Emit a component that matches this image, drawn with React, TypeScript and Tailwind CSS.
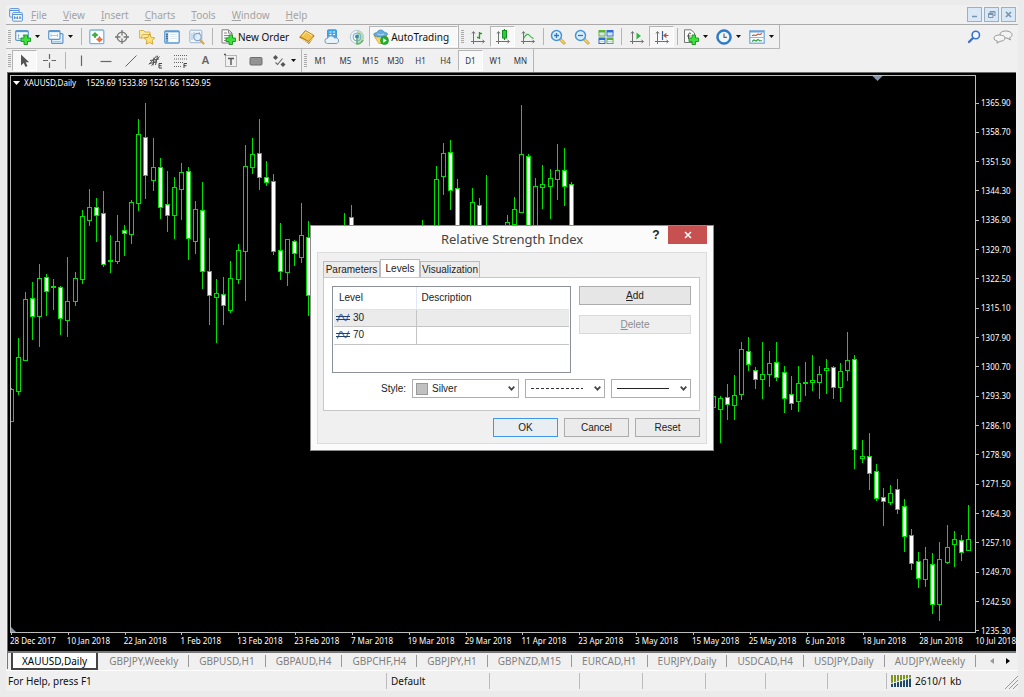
import type { ReactNode } from "react";

type Candle = [
  index: number,
  high: number,
  low: number,
  top: number,
  bottom: number,
  down?: number
];

const candles: Candle[] = [
  [0, 388, 421, 389, 421],
  [1, 338, 394, 357, 391],
  [2, 292, 360, 299, 360],
  [3, 282, 339, 298, 316, 1],
  [4, 264, 346, 278, 316],
  [5, 274, 315, 277, 291, 1],
  [6, 279, 309, 286, 287],
  [7, 286, 334, 287, 318, 1],
  [8, 257, 336, 301, 320],
  [9, 272, 305, 278, 301],
  [10, 210, 283, 216, 279],
  [11, 189, 225, 207, 220],
  [12, 198, 241, 207, 215, 1],
  [13, 191, 266, 213, 264, 1],
  [14, 235, 272, 260, 261],
  [15, 215, 263, 241, 261],
  [16, 225, 255, 230, 233, 1],
  [17, 200, 243, 202, 234],
  [18, 119, 210, 134, 203],
  [19, 103, 198, 137, 175, 1],
  [20, 138, 190, 167, 180],
  [21, 158, 218, 167, 207, 1],
  [22, 171, 231, 204, 215, 1],
  [23, 177, 238, 187, 215],
  [24, 163, 219, 172, 189],
  [25, 167, 259, 171, 238, 1],
  [26, 201, 253, 209, 241],
  [27, 182, 288, 210, 271, 1],
  [28, 238, 324, 271, 295, 1],
  [29, 279, 342, 293, 297],
  [30, 277, 324, 294, 305, 1],
  [31, 261, 312, 278, 310],
  [32, 244, 283, 250, 279],
  [33, 145, 300, 166, 251],
  [34, 138, 173, 154, 167],
  [35, 119, 189, 153, 177, 1],
  [36, 161, 185, 177, 182, 1],
  [37, 174, 254, 181, 251, 1],
  [38, 223, 279, 250, 271, 1],
  [39, 239, 285, 239, 272],
  [40, 240, 265, 241, 253, 1],
  [41, 203, 262, 235, 257],
  [42, 221, 315, 237, 295, 1],
  [47, 213, 260, 228, 250],
  [48, 205, 270, 217, 250, 1],
  [58, 220, 260, 230, 250],
  [60, 166, 270, 179, 260],
  [61, 143, 194, 153, 176],
  [62, 140, 209, 152, 190, 1],
  [63, 179, 270, 188, 260, 1],
  [65, 188, 270, 202, 260],
  [66, 198, 270, 205, 250, 1],
  [67, 175, 270, 230, 250],
  [70, 215, 240, 222, 235],
  [71, 197, 240, 209, 224],
  [72, 105, 212, 154, 212],
  [73, 154, 240, 156, 235, 1],
  [74, 178, 240, 186, 235],
  [75, 165, 208, 184, 187],
  [76, 169, 218, 178, 186],
  [77, 144, 199, 170, 179],
  [78, 148, 205, 170, 186, 1],
  [79, 182, 240, 184, 235, 1],
  [99, 396, 407, 396, 407],
  [100, 396, 442, 398, 409],
  [101, 384, 419, 397, 404, 1],
  [102, 375, 419, 395, 405],
  [103, 342, 399, 349, 394],
  [104, 337, 370, 351, 364, 1],
  [105, 367, 388, 370, 379, 1],
  [106, 342, 398, 374, 379],
  [107, 351, 386, 363, 374],
  [108, 342, 380, 362, 377, 1],
  [109, 366, 412, 372, 398, 1],
  [110, 376, 409, 394, 403, 1],
  [111, 366, 411, 383, 401],
  [112, 362, 395, 382, 383],
  [113, 355, 390, 380, 382],
  [114, 366, 398, 374, 382],
  [115, 359, 393, 368, 370],
  [116, 366, 398, 367, 387, 1],
  [117, 363, 401, 371, 387],
  [118, 332, 380, 360, 370],
  [119, 355, 468, 359, 449, 1],
  [120, 440, 462, 456, 458],
  [121, 433, 489, 456, 473, 1],
  [122, 464, 500, 471, 498, 1],
  [123, 488, 525, 497, 501, 1],
  [124, 485, 504, 493, 502],
  [125, 479, 513, 489, 509, 1],
  [126, 499, 551, 506, 536, 1],
  [127, 529, 569, 535, 563, 1],
  [128, 552, 587, 561, 578, 1],
  [129, 547, 586, 559, 579],
  [130, 553, 613, 564, 604, 1],
  [131, 542, 620, 559, 604],
  [132, 525, 563, 547, 562],
  [133, 531, 566, 539, 544],
  [134, 535, 560, 540, 552, 1],
  [135, 505, 550, 539, 550],
];

const prices = [
  "1365.90", "1358.70", "1351.50", "1344.30", "1336.90", "1329.70", "1322.50",
  "1315.10", "1307.90", "1300.70", "1293.30", "1286.10", "1278.90", "1271.50",
  "1264.30", "1257.10", "1249.70", "1242.50", "1235.30",
];

const dates = [
  "28 Dec 2017", "10 Jan 2018", "22 Jan 2018", "1 Feb 2018", "13 Feb 2018",
  "23 Feb 2018", "7 Mar 2018", "19 Mar 2018", "29 Mar 2018", "11 Apr 2018",
  "23 Apr 2018", "3 May 2018", "15 May 2018", "25 May 2018", "6 Jun 2018",
  "18 Jun 2018", "28 Jun 2018",
];

const menus = ["File", "View", "Insert", "Charts", "Tools", "Window", "Help"];

const charts = [
  "GBPJPY,Weekly", "GBPUSD,H1", "GBPAUD,H4", "GBPCHF,H4", "GBPJPY,H1",
  "GBPNZD,M15", "EURCAD,H1", "EURJPY,Daily", "USDCAD,H4", "USDJPY,Daily",
  "AUDJPY,Weekly",
];

const timeframes = ["M1", "M5", "M15", "M30", "H1", "H4", "D1", "W1", "MN"];

const Svg = ({ children }: { children: ReactNode }) => (
  <svg className="w-4 h-4 shrink-0" viewBox="0 0 16 16" fill="none" aria-hidden="true">
    {children}
  </svg>
);

const plus = (
  <path d="M9 6h3.500v3H15.500v3.500h-3v3H9v-3H6V9h3z" fill="#3fe03f" stroke="#17951a" strokeWidth=".9" />
);

const axes = (
  <path d="M3.500 3v12M1 12.500h13M2 4.500l1.500-2 1.500 2M12.500 11l2 1.500-2 1.500" stroke="#707070" />
);

const lens = (
  <>
    <path d="M9.500 9.500l4.500 4.500" stroke="#c2912a" strokeWidth="3" strokeLinecap="round" />
    <path d="M10 10l4 4" stroke="#f8d974" strokeWidth="1.600" strokeLinecap="round" />
    <circle cx="6.500" cy="6.500" r="5" fill="#d8eefc" stroke="#4a94d6" strokeWidth="1.500" />
  </>
);

const icons: Record<string, ReactNode> = {
  newChart: (
    <>
      <rect x=".7" y="1.700" width="12.600" height="9.600" rx="1" fill="#f5faff" stroke="#5d98cc" strokeWidth="1.200" />
      <path d="M1 2.500h12" stroke="#5d98cc" strokeWidth="1.300" />
      <path d="M3.500 5v4M2.500 6.500h2M8.500 5v3M7.500 6.500h2M3 9.500h3" stroke="#8daccb" strokeWidth=".8" />
      {plus}
    </>
  ),
  profiles: (
    <>
      <rect x="3.600" y="4.600" width="11.300" height="9.800" rx="1" fill="#e4f0fc" stroke="#5d98cc" strokeWidth="1.200" />
      <rect x=".7" y="1.700" width="11.300" height="8.600" rx="1" fill="#f8fbff" stroke="#5d98cc" strokeWidth="1.200" />
      <path d="M1 2.500h11" stroke="#5d98cc" strokeWidth="1.300" />
      <path d="M3 5v3M9.500 5v3M3 6.500h6.500M5 12.500h8" stroke="#9dbfe0" strokeWidth=".8" />
    </>
  ),
  marketWatch: (
    <>
      <rect x=".8" y="1" width="14" height="13.600" rx="1.200" fill="#fdfeff" stroke="#79b4e4" strokeWidth="1.300" />
      <path d="M6 3.500L9 6.300 7.500 6.500 6 9 4.500 6.500 3 6.300z" fill="#35b63a" stroke="#1f8f25" strokeWidth=".6" />
      <path d="M10.500 13l-3-2.800L9 10l1.500-2.500L12 10l1.500.2z" fill="#f46a37" stroke="#d04a18" strokeWidth=".6" />
    </>
  ),
  target: (
    <>
      <circle cx="8" cy="8" r="4.800" stroke="#777" strokeWidth="1.300" />
      <path d="M8 1v5.500M8 9.500V15M1 8h5.500M9.500 8H15" stroke="#777" strokeWidth="1.300" />
    </>
  ),
  favorites: (
    <>
      <path d="M.5 3V1.500h4l1.500 1.500h5V9H.5z" fill="#fbe9a2" stroke="#d0a63c" strokeWidth=".8" />
      <path d="M2 9.500l1.500-4H12" stroke="#d0a63c" strokeWidth=".8" />
      <path d="M10.500 5l1.600 3.400 3.700.5-2.700 2.600.7 3.700-3.300-1.800-3.300 1.800.7-3.700-2.700-2.600 3.700-.5z" fill="#ffe375" stroke="#c8962c" strokeWidth=".8" />
    </>
  ),
  navigator: (
    <>
      <rect x=".8" y="1.800" width="14.400" height="12.200" rx="1" fill="#fbfdff" stroke="#5a98d2" strokeWidth="1.300" />
      <path d="M1 2.700h14" stroke="#5a98d2" strokeWidth="1.300" />
      <path d="M3 4v9.500" stroke="#6ea6db" strokeWidth="2.400" />
      <path d="M2.500 5.500h1M2.500 7.500h1M2.500 9.500h1" stroke="#234" />
      <path d="M6 5.500h7M6 7.500h7M6 9.500h7" stroke="#d2dfea" strokeWidth=".7" />
    </>
  ),
  tester: (
    <>
      <rect x=".8" y="1.200" width="12" height="12.500" rx="1" fill="#f1f6fb" stroke="#9ab6d2" />
      <path d="M3 11V4M5 9V3M7 10V4M10.500 6V3" stroke="#a5bcd2" />
      <path d="M11 11l3.500 3.500" stroke="#dba839" strokeWidth="2.200" strokeLinecap="round" />
      <circle cx="8.500" cy="8" r="3.700" fill="#dcecf9" fillOpacity=".8" stroke="#82a6cb" strokeWidth="1.200" />
    </>
  ),
  newOrder: (
    <>
      <path d="M2 .8h6.500L12 4v10H2z" fill="#fafafa" stroke="#808080" />
      <path d="M8.500 1v3.200H12M4 4h3M4 6.500h6M4 9h4M4 11.500h3" stroke="#808080" strokeWidth=".9" />
      {plus}
    </>
  ),
  book: (
    <>
      <path d="M.8 8.500L6.500 2l8.500 5-5 7.500z" fill="#b67a12" stroke="#91600a" strokeWidth=".7" />
      <path d="M1 7.700L6.500 1.500 15 6.500l-5.200 6z" fill="#f1c24a" stroke="#a7700e" strokeWidth=".7" />
      <path d="M3.500 7L7 3l6 3.500" stroke="#fbe59b" />
      <path d="M1.500 9.500l8.300 4L14.500 8" stroke="#fff4d0" strokeWidth=".8" />
    </>
  ),
  cloud: (
    <>
      <rect x="3.500" y=".8" width="9" height="8.500" rx=".8" fill="#3fa9f0" stroke="#2d8dd8" strokeWidth=".8" />
      <path d="M5.500 3h2M9 3h2M5.500 5.500h2M9 5.500h2" stroke="#fff" strokeWidth="1.200" />
      <path d="M3.500 14.500a2.600 2.600 0 0 1 0-5.200 3.800 3.800 0 0 1 7-.3 2.800 2.800 0 0 1 2.300 5.500z" fill="#eaf2f9" stroke="#6d92b2" strokeWidth=".9" />
    </>
  ),
  signals: (
    <>
      <circle cx="8" cy="8" r="6.700" fill="#edf3f6" stroke="#b3cad6" />
      <path d="M8 1.300a6.700 6.700 0 0 1 1 13.300z" fill="#b7dcb2" />
      <circle cx="8" cy="8" r="4" stroke="#7cadcb" />
      <circle cx="8" cy="7.500" r="2" fill="#3f87ba" />
      <path d="M8 9v6c3 0 5-2 6-4" stroke="#65b068" strokeWidth="1.600" />
    </>
  ),
  auto: (
    <>
      <path d="M1 7h13l-4.500 7.500H6z" fill="#f8d860" stroke="#cc9f30" strokeWidth=".7" />
      <path d="M.6 5.500C1 3.700 3 4 4 3.500 5 .2 10.300.2 11.200 3.200c1.400.2 3.300.4 3.400 2C14 7.500 10 8 7.500 8S1.500 8 .6 5.500z" fill="#63addf" stroke="#4285b9" strokeWidth=".7" />
      <path d="M4.500 5c2 1 4.500 1 6.500 0" stroke="#b8ddf5" />
      <circle cx="11.500" cy="11.500" r="4" fill="#1fb52e" stroke="#118320" strokeWidth=".6" />
      <path d="M10.200 9.200l3.500 2.300-3.500 2.300z" fill="#fff" />
    </>
  ),
  bars: (
    <>
      {axes}
      <path d="M9.500 3v7M9.500 4.500h2.500M7 8.500h2.500" stroke="#1f9a2b" strokeWidth="1.300" />
    </>
  ),
  candle: (
    <>
      {axes}
      <path d="M9.500 0v11" stroke="#149221" strokeWidth="1.200" />
      <rect x="7.500" y="1.500" width="4" height="7.500" fill="#2fca42" stroke="#149221" />
    </>
  ),
  line: (
    <>
      {axes}
      <path d="M3.500 9.500c3-5 4.500-5 6-3s2.500 2 4 3" stroke="#3fae49" strokeWidth="1.200" />
    </>
  ),
  zoomIn: (
    <>
      {lens}
      <path d="M4 6.500h5M6.500 4v5" stroke="#2f78bd" strokeWidth="1.300" />
    </>
  ),
  zoomOut: (
    <>
      {lens}
      <path d="M4 6.500h5" stroke="#2f78bd" strokeWidth="1.300" />
    </>
  ),
  tile: (
    <>
      <path d="M.5 1h7v6.500h-7zM8.500 8.500h7V15h-7z" fill="#5fae35" />
      <path d="M8.500 1h7v6.500h-7zM.5 8.500h7V15h-7z" fill="#2f6dd0" />
      <path d="M1.500 3.500h5v3h-5zM9.500 3.500h5v3h-5zM1.500 11h5v3h-5zM9.500 11h5v3h-5z" fill="#eaf5ff" />
      <path d="M2 5h4M10 5h4M2 12.500h4M10 12.500h4" stroke="#a9c8dd" strokeWidth=".7" />
    </>
  ),
  scroll: (
    <>
      {axes}
      <path d="M7.500 3.500l4.500 3.500-4.500 3.500z" fill="#2fb83e" />
    </>
  ),
  shift: (
    <>
      {axes}
      <path d="M8.500 2v9" stroke="#31639a" strokeWidth="1.200" />
      <path d="M14.500 6.500H10M12.500 4.500l-2.500 2 2.500 2" stroke="#c5482a" strokeWidth="1.200" />
    </>
  ),
  indicator: (
    <>
      <path d="M1.500.8H8L11.500 4v9.500h-10z" fill="#fafafa" stroke="#777" />
      <path d="M8 4.500c-2-1-2.500 0-2.500 1.500V10M4 7h3.500" stroke="#555" />
      {plus}
    </>
  ),
  clock: (
    <>
      <circle cx="8" cy="8" r="6.400" fill="#f1f8fd" stroke="#2f7fd0" strokeWidth="2.200" />
      <circle cx="8" cy="8" r="7.400" stroke="#1f5fa8" strokeWidth=".5" />
      <path d="M8 4.500v3.800h3" stroke="#666" strokeWidth="1.200" />
    </>
  ),
  template: (
    <>
      <rect x=".8" y="1.800" width="14.400" height="12.400" fill="#fbfdff" stroke="#6ea6da" strokeWidth="1.200" />
      <path d="M1 2.800h14" stroke="#5c97cf" strokeWidth="1.300" />
      <path d="M1 8.500h14" stroke="#8db8e0" />
      <path d="M3 6.800l2-.8 2 .5 2-1.500 2 .5 2-1" stroke="#bd4b36" strokeWidth="1.100" />
      <path d="M3 12.500l2-1.500 2 1 2-1.500 2 1.500 2-.5" stroke="#2fa23e" strokeWidth="1.100" />
    </>
  ),
  cursor: <path d="M4 1.500v11l2.700-2.400L8.500 14l2-.9-1.800-3.800h3.500z" fill="#555" />,
  cross: <path d="M7.500 1v5M7.500 9.500v5.500M1 7.500h5M9.500 7.500H14" stroke="#666" strokeWidth="1.200" />,
  vline: <path d="M8.500 2.500v10.500" stroke="#666" strokeWidth="1.200" />,
  hline: <path d="M2.500 8.500h11" stroke="#666" strokeWidth="1.200" />,
  trend: <path d="M2.500 13.500l11-11" stroke="#666" />,
  channel: (
    <>
      <path d="M1 11.500l8-9M3.500 12.500l8-9M2 7.500l9-1.500M1 10.500l8-1.500M6 4.500l-1 8M9.500 3l-2 9" stroke="#555" />
      <path d="M14 10.500h-3v4.500h3M11 12.700h2.500" stroke="#444" />
    </>
  ),
  fibo: (
    <>
      <path d="M1 2.500h13M1 6h13M1 9.500h9M1 13.500h8" stroke="#666" strokeDasharray="1 1" />
      <path d="M14 10.500h-3V15M11 12.700h2.500" stroke="#444" />
    </>
  ),
  textLabel: (
    <>
      <rect x="2.500" y="2.500" width="11" height="11" stroke="#777" strokeDasharray="1 1" />
      <path d="M1 1.500h2M5 5.500h6M8 5.500V12" stroke="#555" strokeWidth="1.400" />
    </>
  ),
  rect: <rect x="2" y="4.500" width="12" height="7.500" rx="1" fill="#939393" stroke="#6e6e6e" />,
  arrows: (
    <>
      <path d="M4.500 2l2.500 2.500L4.500 7 2 4.500z" fill="#555" />
      <path d="M12 9l2.500 2.500L12 14l-2.500-2.500z" fill="#555" />
      <path d="M4.500 9.500l2 2 5-6" stroke="#666" strokeWidth="1.100" />
    </>
  ),
};

const Grip = () => (
  <div className="w-1.5 shrink-0 flex justify-center py-1">
    <div className="w-[3px] bg-[repeating-linear-gradient(#aaa_0_1px,#f0f0f0_1px_2px)]" />
  </div>
);

const Divider = () => (
  <div className="w-1.5 shrink-0 flex justify-center py-0.5">
    <div className="w-px bg-[#b5b5b5]" />
  </div>
);

type ToolProps = {
  icon: string;
  label: string;
  pressed?: boolean;
  narrow?: boolean;
};

const Tool = ({ icon, label, pressed, narrow }: ToolProps) => (
  <button
    aria-label={label}
    className={`${narrow ? "w-6" : "w-[25px]"} shrink-0 flex items-center justify-center ${
      pressed ? "border border-[#b5b5b5] border-r-white border-b-white bg-[#f8f8f8]" : ""
    }`}
  >
    <Svg>{icons[icon]}</Svg>
  </button>
);

const DropTool = ({ icon, label }: { icon: string; label: string }) => (
  <button aria-label={label} className="w-[33px] shrink-0 flex items-center gap-1 pl-[3px]">
    <Svg>{icons[icon]}</Svg>
    <svg className="w-[5px] h-[3px]" viewBox="0 0 5 3" aria-hidden="true">
      <path d="M0 0h5L2.500 3z" fill="#111" />
    </svg>
  </button>
);

const MenuBar = () => (
  <header className="h-5 shrink-0 flex items-center border-b border-[#ababab] pl-[3px] pr-0.5">
    <svg className="w-3.5 h-3.5" viewBox="0 0 14 14" fill="none" aria-hidden="true">
      <rect x=".6" y=".6" width="9.500" height="8.500" rx="1" fill="#e7f1fc" stroke="#5f93d8" />
      <path d="M1 2.500h9" stroke="#5f93d8" />
      <rect x="3.600" y="4.600" width="9.800" height="8.600" rx="1" fill="#f3f8fe" stroke="#5f93d8" />
      <path d="M4 6.500h9M5.500 11V8.500l1.500 2 1.500-2V11M10 11l1-2.500 1 2.500" stroke="#5f93d8" />
    </svg>
    <nav className="flex">
      {menus.map((menu) => (
        <button key={menu} className="px-2 text-[10px] leading-4 text-[#a3a3a3]">
          <span className="underline">{menu[0]}</span>
          {menu.slice(1)}
        </button>
      ))}
    </nav>
    <div className="ml-auto flex gap-0.5">
      <button aria-label="Minimize" className="w-[15px] h-[15px] bg-[#d9e8f6] border border-[#9ab0c6] flex items-center justify-center">
        <svg className="w-[9px] h-[9px]" viewBox="0 0 9 9" aria-hidden="true">
          <path d="M2 6.500h5" stroke="#7b93ab" strokeWidth="1.500" />
        </svg>
      </button>
      <button aria-label="Restore" className="w-[15px] h-[15px] bg-[#d9e8f6] border border-[#9ab0c6] flex items-center justify-center">
        <svg className="w-[9px] h-[9px]" viewBox="0 0 9 9" fill="none" aria-hidden="true">
          <path d="M3 3V1.500h5v4H6.500M1.500 3.500h4.500v4H1.500zM1.500 4.500H6M3 2h5" stroke="#7b93ab" />
        </svg>
      </button>
      <button aria-label="Close window" className="w-[15px] h-[15px] bg-[#d9e8f6] border border-[#9ab0c6] flex items-center justify-center">
        <svg className="w-[9px] h-[9px]" viewBox="0 0 9 9" aria-hidden="true">
          <path d="M2 2l5 5M7 2L2 7" stroke="#7b93ab" strokeWidth="1.700" />
        </svg>
      </button>
    </div>
  </header>
);

const Toolbars = () => (
  <>
    <div className="h-6 shrink-0 flex items-stretch">
      <div className="flex py-px border-b border-r border-[#b5b5b5]">
        <Grip />
        <DropTool icon="newChart" label="New chart" />
        <DropTool icon="profiles" label="Profiles" />
        <Divider />
        <Tool icon="marketWatch" label="Market Watch" />
        <Tool icon="target" label="Data Window" />
        <Tool icon="favorites" label="Navigator" />
        <Tool icon="navigator" label="Terminal" />
        <Tool icon="tester" label="Strategy Tester" />
        <Divider />
        <button className="shrink-0 flex items-center gap-0.5 px-[5px] text-[10px] leading-4 text-[#111]">
          <Svg>{icons.newOrder}</Svg>
          New Order
        </button>
        <Tool icon="book" label="MetaEditor" />
        <Tool icon="cloud" label="Virtual hosting" />
        <Tool icon="signals" label="Signals" />
        <button className="shrink-0 flex items-center gap-0.5 pl-[3px] pr-2 border border-[#b5b5b5] border-r-white border-b-white bg-[#f8f8f8] text-[10px] leading-4 text-[#111]">
          <Svg>{icons.auto}</Svg>
          AutoTrading
        </button>
      </div>
      <div className="flex py-px border-b border-r border-[#b5b5b5]">
        <Grip />
        <Tool icon="bars" label="Bar chart" />
        <Tool icon="candle" label="Candlesticks" pressed />
        <Tool icon="line" label="Line chart" />
        <Divider />
        <Tool icon="zoomIn" label="Zoom in" narrow />
        <Tool icon="zoomOut" label="Zoom out" narrow />
        <Tool icon="tile" label="Tile windows" narrow />
        <Divider />
        <Tool icon="scroll" label="Auto scroll" />
        <Tool icon="shift" label="Chart shift" pressed />
        <Divider />
        <DropTool icon="indicator" label="Indicators" />
        <DropTool icon="clock" label="Periods" />
        <DropTool icon="template" label="Templates" />
      </div>
      <div className="ml-auto flex items-center gap-3 pr-[5px]">
        <button aria-label="Search">
          <svg className="w-3.5 h-3.5" viewBox="0 0 14 14" fill="none" aria-hidden="true">
            <path d="M6.500 7.500L2 12" stroke="#3a74cf" strokeWidth="2.400" strokeLinecap="round" />
            <circle cx="8.800" cy="5" r="3.700" fill="#f4f9ff" stroke="#3a74cf" strokeWidth="1.600" />
          </svg>
        </button>
        <button aria-label="Chat">
          <svg className="w-5 h-3.5" viewBox="0 0 20 14" fill="#f4f4f4" stroke="#999" aria-hidden="true">
            <path d="M12.500 1c3.500 0 6.500 1.300 6.500 3.700 0 1.500-1 2.500-2.500 3l1 2.300-3.500-2c-4 .3-7-1-7-3.300S9 1 12.500 1z" />
            <path d="M6.500 5C9.500 5 12 6 12 8s-2.500 3.300-5 3.300L4 13.200l.3-2.200C2 10.500 1 9.500 1 8c0-2 2.500-3 5.500-3z" />
          </svg>
        </button>
      </div>
    </div>
    <div className="h-[23px] shrink-0 flex items-stretch">
      <div className="flex py-px border-r border-[#b5b5b5]">
        <Grip />
        <Tool icon="cursor" label="Cursor" pressed />
        <Tool icon="cross" label="Crosshair" />
        <Divider />
        <Tool icon="vline" label="Vertical line" />
        <Tool icon="hline" label="Horizontal line" />
        <Tool icon="trend" label="Trendline" />
        <Tool icon="channel" label="Equidistant channel" />
        <Tool icon="fibo" label="Fibonacci retracement" />
        <button className="w-[25px] text-[11px] font-semibold text-[#666]">A</button>
        <Tool icon="textLabel" label="Text label" />
        <Tool icon="rect" label="Rectangle" />
        <DropTool icon="arrows" label="Arrows" />
      </div>
      <div className="flex py-px border-r border-[#b5b5b5]">
        <Grip />
        {timeframes.map((frame) => (
          <button
            key={frame}
            className={
              frame === "D1"
                ? "w-[25px] text-[8px] text-[#333] border border-[#b5b5b5] border-r-white border-b-white bg-[#f8f8f8]"
                : "w-[25px] text-[8px] text-[#333]"
            }
          >
            {frame}
          </button>
        ))}
      </div>
    </div>
  </>
);

const CandleChart = () => (
  <svg
    className="absolute inset-0 w-full h-full"
    viewBox="11 76 964 556"
    preserveAspectRatio="none"
    role="img"
    aria-label="XAUUSD daily candlesticks"
  >
    {candles.map(([index, high, low, top, bottom, down]) => {
      const x = Math.floor(11.2 + index * 7.09) + 0.5;
      return (
        <g key={index} stroke="#00e000">
          <path d={`M${x} ${high}V${top}M${x} ${bottom}V${low + 1}`} />
          <rect
            x={x - 2}
            y={top + 0.5}
            width="4"
            height={bottom - top}
            fill={down ? "#fff" : "#000"}
          />
        </g>
      );
    })}
    <path d="M872.500 76h10l-5 5z" fill="#8594ab" />
    <path d="M11 627v5h5z" fill="#8594ab" />
  </svg>
);

const Chart = () => (
  <main className="flex-1 min-h-0 flex ml-px mr-0.5 pl-0.5 pt-0.5 bg-black border-l border-t border-[#6a6a6a] text-[8px] text-white">
    <div className="flex-1 min-w-0 flex flex-col">
      <div className="relative flex-1 border border-[#bdbdbd]">
        <CandleChart />
        <div className="relative flex items-center pl-0.5 pt-0.5 leading-2.5">
          <svg className="w-[7px] h-1 mr-1" viewBox="0 0 7 4" aria-hidden="true">
            <path d="M0 0h7L3.500 4z" fill="#fff" />
          </svg>
          <span className="mr-2.5">XAUUSD,Daily</span>
          <span>1529.69 1533.89 1521.66 1529.95</span>
        </div>
      </div>
      <div className="h-[18px] flex">
        {dates.map((date) => (
          <div key={date} className="flex-1 min-w-0 whitespace-nowrap leading-3">
            <div className="w-px h-0.5 ml-px bg-[#bdbdbd]" />
            {date}
          </div>
        ))}
      </div>
    </div>
    <div className="w-10 shrink-0 flex flex-col">
      <div className="flex-1 flex flex-col justify-between pt-6">
        {prices.map((price) => (
          <div key={price} className="flex items-center gap-0.5 h-2 leading-2">
            <div className="w-[3px] h-px bg-[#bdbdbd]" />
            {price}
          </div>
        ))}
      </div>
      <div className="h-4 flex justify-end whitespace-nowrap leading-3">10 Jul 2018</div>
    </div>
  </main>
);

const ChartTabs = () => (
  <div className="h-[19px] shrink-0 flex items-start text-[10px] leading-4 border-t-2 border-[#777] ml-px mr-0.5 text-[#808080]">
    <div className="w-1 h-4 border-l border-[#777]" />
    <button className="px-[9px] mr-px h-[17px] bg-white border-2 border-t-0 border-[#444] text-black">
      XAUUSD,Daily
    </button>
    {charts.map((chart) => (
      <button key={chart} className="flex items-center whitespace-nowrap">
        <span className="px-[10px]">{chart}</span>
        <span className="w-px h-3 bg-[#999]" />
      </button>
    ))}
    <div className="ml-auto flex gap-3 pt-1 pr-1.5">
      <button aria-label="Previous charts" className="w-1 h-2 flex items-center">
        <svg className="w-1 h-1.5" viewBox="0 0 4 6" aria-hidden="true">
          <path d="M4 0v6L0 3z" fill="#999" />
        </svg>
      </button>
      <button aria-label="Next charts" className="w-1 h-2 flex items-center">
        <svg className="w-1 h-1.5" viewBox="0 0 4 6" aria-hidden="true">
          <path d="M0 0v6l4-3z" fill="#000" />
        </svg>
      </button>
    </div>
  </div>
);

const StatusBar = () => (
  <footer className="h-[21px] shrink-0 flex items-stretch pt-0.5 pb-0.5 text-[10px] leading-4 text-[#111] border-t border-white">
    <div className="flex-1 pl-0.5">For Help, press F1</div>
    <div className="w-[103px] pl-1 border-l border-[#bbb]">Default</div>
    <div className="w-[90px] border-l border-[#bbb]" />
    <div className="w-[63px] border-l border-[#bbb]" />
    <div className="w-[63px] border-l border-[#bbb]" />
    <div className="w-[60px] border-l border-[#bbb]" />
    <div className="w-[62px] border-l border-[#bbb]" />
    <div className="w-[59px] border-l border-[#bbb]" />
    <div className="w-[132px] pl-1 flex items-center gap-[3px] border-l border-[#bbb]">
      <svg className="w-[21px] h-3" viewBox="0 0 21 12" aria-hidden="true">
        {[0, 3, 6, 9, 12, 15, 18].map((x) => (
          <g key={x}>
            <rect x={x} y="0" width="2" height="12" fill="#7d951f" />
            <rect x={x} y={9 - x / 3} width="2" height={3 + x / 3} fill="#1d4a68" />
          </g>
        ))}
        <path d="M0 8.500L21 2.500" stroke="#f0f0f0" />
      </svg>
      2610/1 kb
      <svg className="w-3.5 h-3.5 ml-auto self-end" viewBox="0 0 14 14" aria-hidden="true">
        <path d="M1 14L14 1M5 14l9-9M9 14l5-5" stroke="#999" />
      </svg>
    </div>
  </footer>
);

const LevelIcon = () => (
  <svg className="w-3.5 h-2.5 shrink-0" viewBox="0 0 14 10" fill="none" aria-hidden="true">
    <path d="M1 8.500C3 7 3 1.500 5 1.500S7.500 7.500 9.500 7.500 11.500 2 13 1" stroke="#4f7ec4" strokeWidth="1.300" />
    <path d="M0 3.500h14M0 6.500h14" stroke="#24406b" />
  </svg>
);

const StyleSelect = ({
  label,
  width,
  value = "",
  children,
}: {
  label: string;
  width: string;
  value?: string;
  children: ReactNode;
}) => (
  <div className={`relative h-[19px] ${width}`}>
    <select
      id={label}
      aria-label={label}
      className="block appearance-none w-full h-full pl-[19px] bg-white border border-[#aeaeae] text-[10px] text-[#222]"
    >
      <option>{value}</option>
    </select>
    <div className="absolute inset-0 flex items-center justify-between pl-1 pr-1 pointer-events-none">
      {children}
      <svg className="w-[7px] h-[5px]" viewBox="0 0 7 5" fill="none" aria-hidden="true">
        <path d="M.7.7l2.800 3L6.300.7" stroke="#444" strokeWidth="1.700" />
      </svg>
    </div>
  </div>
);

const Dialog = () => (
  <section
    role="dialog"
    aria-label="Relative Strength Index"
    className="absolute left-1/2 top-[225px] -translate-x-1/2 w-[404px] px-1.5 pb-1.5 bg-[#fbfbfb] border border-[#8c8c8c] font-['Liberation_Sans',Arial,sans-serif] text-[10px] leading-3 text-[#222]"
  >
    <div className="h-[26px] grid grid-cols-[1fr_auto_1fr] items-start">
      <div />
      <h1 className="pt-[5px] text-[13px] leading-4 text-[#444] font-['Noto_Sans','Open_Sans',sans-serif]">
        Relative Strength Index
      </h1>
      <div className="flex justify-end items-start gap-1">
        <button aria-label="Help" className="w-4 h-[18px] text-xs font-bold text-[#222]">
          ?
        </button>
        <button aria-label="Close" className="w-[39px] h-[18px] flex items-center justify-center bg-[#c75050]">
          <svg className="w-2 h-2" viewBox="0 0 8 8" aria-hidden="true">
            <path d="M1 1l6 6M7 1L1 7" stroke="#fff" strokeWidth="1.500" />
          </svg>
        </button>
      </div>
    </div>
    <div className="bg-[#f0f0f0] border border-[#dcdcdc] py-1.5 pl-[5px] pr-1.5">
      <div role="tablist" className="flex items-end">
        <button role="tab" className="w-[57px] h-4 border border-b-0 border-[#bcbcbc] bg-[#ececec]">
          Parameters
        </button>
        <button role="tab" aria-selected="true" className="w-10 h-[18px] border border-b-0 border-[#bcbcbc] bg-white">
          Levels
        </button>
        <button role="tab" className="w-[60px] h-4 border border-b-0 border-[#bcbcbc] bg-[#ececec]">
          Visualization
        </button>
      </div>
      <div className="h-[134px] border border-[#c8c8c8] bg-white px-2 pt-2">
        <div className="flex gap-2">
          <div className="flex-1 h-[87px] border border-[#8b909a] px-px">
            <table className="w-full table-fixed border-collapse">
              <thead>
                <tr className="h-[22px] border-b border-[#dfe4ec]">
                  <th className="w-[82px] pl-[5px] text-left font-normal border-r border-[#dfe9f5]">Level</th>
                  <th className="pl-[5px] text-left font-normal">Description</th>
                </tr>
              </thead>
              <tbody>
                <tr className="h-[17px] bg-[#ebebeb] border-b border-[#c4c4c4]">
                  <td className="border-r border-[#c4c4c4]">
                    <div className="flex items-center gap-[3px] pl-0.5">
                      <LevelIcon />
                      30
                    </div>
                  </td>
                  <td />
                </tr>
                <tr className="h-[18px] border-b border-[#c4c4c4]">
                  <td className="border-r border-[#c4c4c4]">
                    <div className="flex items-center gap-[3px] pl-0.5">
                      <LevelIcon />
                      70
                    </div>
                  </td>
                  <td />
                </tr>
              </tbody>
            </table>
          </div>
          <div className="w-28 flex flex-col gap-2.5">
            <button className="h-[19px] bg-[#e6e6e6] border border-[#acacac]">
              <span className="underline">A</span>dd
            </button>
            <button disabled className="h-[19px] bg-[#efefef] border border-[#d9d9d9] text-[#8c8c8c]">
              <span className="underline">D</span>elete
            </button>
          </div>
        </div>
        <div className="flex items-center justify-end gap-1.5 pt-1.5">
          <label htmlFor="Style">Style:</label>
          <StyleSelect label="Style" width="w-[107px]" value="Silver">
            <span className="w-3 h-3 bg-[#c0c0c0] border border-[#999]" />
          </StyleSelect>
          <StyleSelect label="Line type" width="w-20">
            <svg className="w-[54px] h-px" aria-hidden="true">
              <path d="M2 .5h52" stroke="#333" strokeDasharray="3 2" />
            </svg>
          </StyleSelect>
          <StyleSelect label="Line width" width="w-20">
            <svg className="w-[54px] h-px" aria-hidden="true">
              <path d="M2 .5h52" stroke="#222" />
            </svg>
          </StyleSelect>
        </div>
      </div>
      <div className="flex justify-end gap-1.5 pt-[7px]">
        <button className="w-[65px] h-[19px] bg-[#e9eef3] border border-[#3f96ea]">OK</button>
        <button className="w-[65px] h-[19px] bg-[#ebebeb] border border-[#acacac]">Cancel</button>
        <button className="w-[65px] h-[19px] bg-[#ebebeb] border border-[#acacac]">Reset</button>
      </div>
    </div>
  </section>
);

export default function App() {
  return (
    <div className="relative h-screen overflow-hidden flex flex-col bg-[#ebebeb] px-1.5 pt-[5px] pb-1.5 font-['Noto_Sans','Open_Sans',sans-serif]">
      <div className="flex-1 min-h-0 flex flex-col bg-[#f0f0f0]">
        <MenuBar />
        <Toolbars />
        <Chart />
        <ChartTabs />
        <StatusBar />
      </div>
      <Dialog />
    </div>
  );
}
